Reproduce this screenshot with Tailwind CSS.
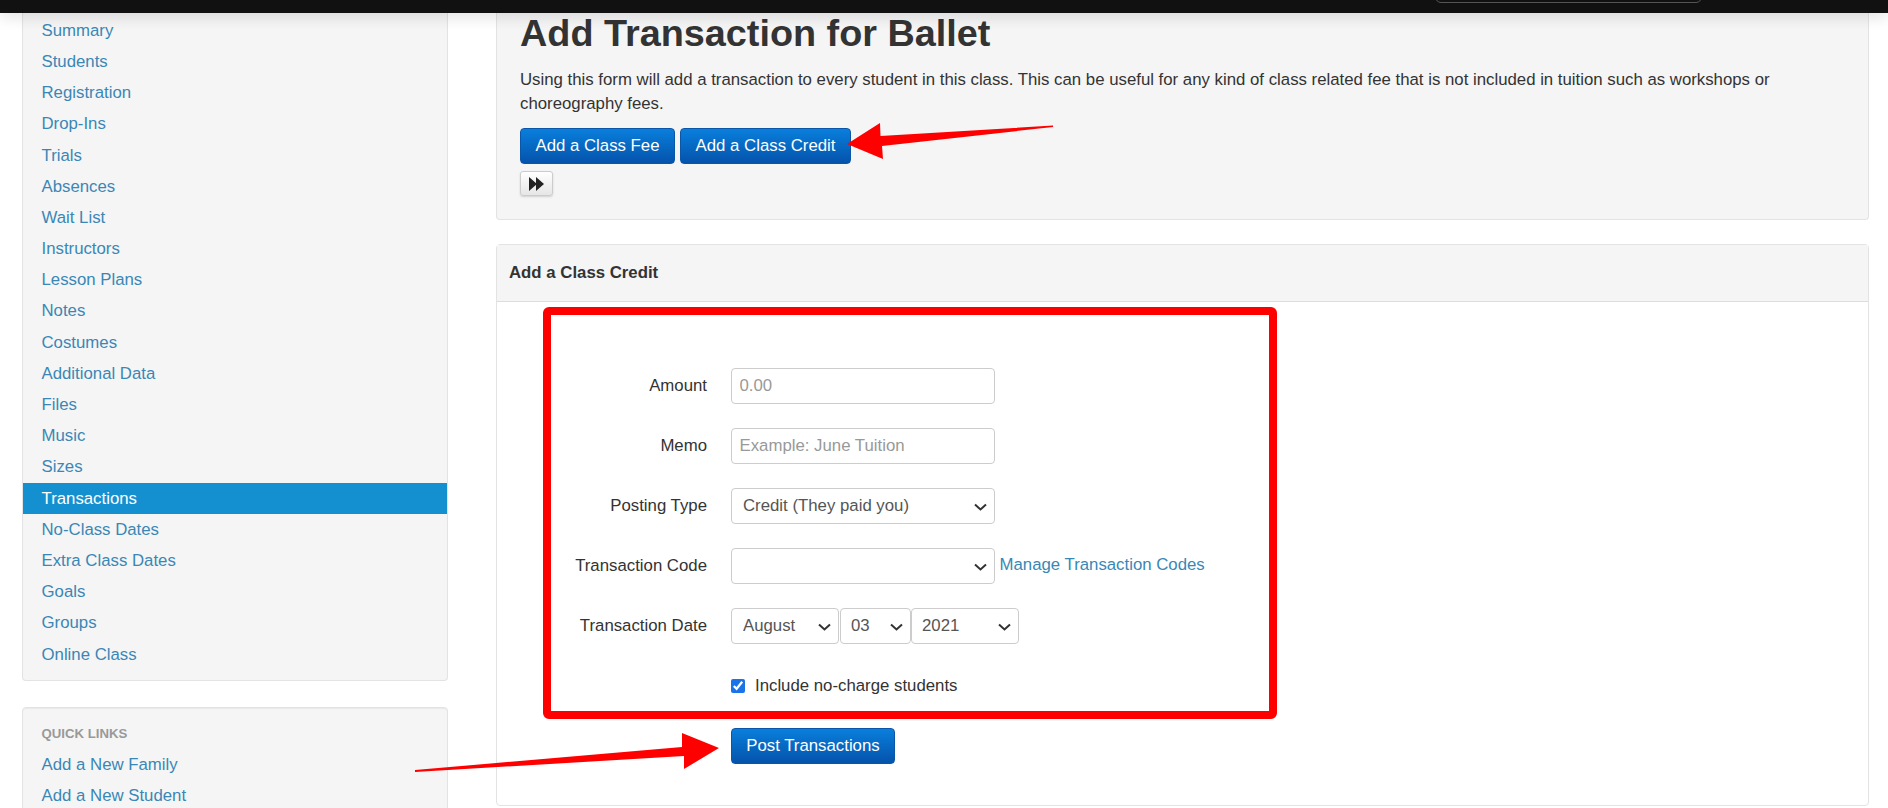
<!DOCTYPE html>
<html lang="en">
<head>
    <meta charset="UTF-8">
    <title>Add Transaction for Ballet</title>
    <script src="https://cdn.jsdelivr.net/npm/@tailwindcss/browser@4"></script>
</head>
<body class="relative h-[808px] overflow-hidden bg-white font-['Liberation_Sans',Arial,sans-serif] text-[16.8px] leading-6 text-[#333]">
    <!-- Top bar -->
    <div class="absolute inset-x-0 top-0 z-10 h-[13px] bg-[#111] shadow-[0_3px_16px_rgba(0,0,0,0.14)]">
        <div class="absolute left-[1435px] top-[-30px] h-[33px] w-[267px] rounded-md border border-[#555]"></div>
    </div>

    <div class="flex items-start pl-[22px] pr-[19px]">
        <!-- Sidebar -->
        <div class="w-[426px] shrink-0">
            <div class="h-[681px] rounded-b border border-t-0 border-[#e3e3e3] bg-[#f5f5f5] pt-[14.8px] shadow-[inset_0_1px_1px_rgba(0,0,0,0.05)]">
                <ul class="text-[#3a87b5]">
                    <li class="h-[31.2px] pl-[18.5px] leading-[31px]">Summary</li>
                    <li class="h-[31.2px] pl-[18.5px] leading-[31px]">Students</li>
                    <li class="h-[31.2px] pl-[18.5px] leading-[31px]">Registration</li>
                    <li class="h-[31.2px] pl-[18.5px] leading-[31px]">Drop-Ins</li>
                    <li class="h-[31.2px] pl-[18.5px] leading-[31px]">Trials</li>
                    <li class="h-[31.2px] pl-[18.5px] leading-[31px]">Absences</li>
                    <li class="h-[31.2px] pl-[18.5px] leading-[31px]">Wait List</li>
                    <li class="h-[31.2px] pl-[18.5px] leading-[31px]">Instructors</li>
                    <li class="h-[31.2px] pl-[18.5px] leading-[31px]">Lesson Plans</li>
                    <li class="h-[31.2px] pl-[18.5px] leading-[31px]">Notes</li>
                    <li class="h-[31.2px] pl-[18.5px] leading-[31px]">Costumes</li>
                    <li class="h-[31.2px] pl-[18.5px] leading-[31px]">Additional Data</li>
                    <li class="h-[31.2px] pl-[18.5px] leading-[31px]">Files</li>
                    <li class="h-[31.2px] pl-[18.5px] leading-[31px]">Music</li>
                    <li class="h-[31.2px] pl-[18.5px] leading-[31px]">Sizes</li>
                    <li class="h-[31.2px] bg-[#1490d0] pl-[18.5px] leading-[31px] text-white">Transactions</li>
                    <li class="h-[31.2px] pl-[18.5px] leading-[31px]">No-Class Dates</li>
                    <li class="h-[31.2px] pl-[18.5px] leading-[31px]">Extra Class Dates</li>
                    <li class="h-[31.2px] pl-[18.5px] leading-[31px]">Goals</li>
                    <li class="h-[31.2px] pl-[18.5px] leading-[31px]">Groups</li>
                    <li class="h-[31.2px] pl-[18.5px] leading-[31px]">Online Class</li>
                </ul>
            </div>
            <div class="mt-[26px] h-[120px] rounded border border-[#e3e3e3] bg-[#f5f5f5] pt-[14px] shadow-[inset_0_1px_1px_rgba(0,0,0,0.05)]">
                <div class="pl-[18.5px] text-[13.2px] font-bold leading-6 text-[#999]">QUICK LINKS</div>
                <div class="mt-[3px] pl-[18.5px] leading-[31px] text-[#3a87b5]">Add a New Family</div>
                <div class="pl-[18.5px] leading-[31px] text-[#3a87b5]">Add a New Student</div>
            </div>
        </div>

        <!-- Main column -->
        <div class="ml-[48px] flex-1">
            <div class="h-[220px] rounded-b border border-t-0 border-[#e3e3e3] bg-[#f5f5f5] pl-[23px] pr-[80px] pt-[11px]">
                <h1 class="text-[37.8px] font-bold leading-[44px] text-[#333]">Add Transaction for Ballet</h1>
                <p class="mt-[13px] leading-6">Using this form will add a transaction to every student in this class. This can be useful for any kind of class related fee that is not included in tuition such as workshops or choreography fees.</p>
                <div class="mt-[12px] flex gap-[5px]">
                    <button class="h-9 w-[155px] rounded border border-[#0a56a8] bg-gradient-to-b from-[#0a7fdc] to-[#0553ab] text-center text-white">Add a Class Fee</button>
                    <button class="h-9 w-[171px] rounded border border-[#0a56a8] bg-gradient-to-b from-[#0a7fdc] to-[#0553ab] text-center text-white">Add a Class Credit</button>
                </div>
                <button class="mt-[7px] flex h-[25px] w-[33px] items-center justify-center rounded-[3px] border border-[#ccc] bg-gradient-to-b from-white to-[#e6e6e6] shadow-[0_1px_2px_rgba(0,0,0,0.15)]">
                    <svg class="h-[14px] w-[15px] shrink-0" viewBox="0 0 15 14" fill="#222"><path d="M0 0l8 7-8 7zM7 0l8 7-8 7z"/></svg>
                </button>
            </div>

            <div class="mt-[24px] h-[562px] rounded border border-[#e3e3e3] bg-white">
                <div class="flex h-[57px] items-center border-b border-[#ddd] bg-[#f5f5f5] pl-3 font-bold text-[#333]">Add a Class Credit</div>
                <div class="pl-[234px] pt-[66px]">
                    <!-- Form rows: labels right-aligned to x 707 -->
                    <div class="flex h-9 items-center">
                        <label class="-ml-[234px] w-[210px] shrink-0 text-right">Amount</label>
                        <input class="ml-[24px] h-9 w-[264px] rounded border border-[#ccc] px-[7.5px] placeholder:text-[#999]" placeholder="0.00">
                    </div>
                    <div class="mt-6 flex h-9 items-center">
                        <label class="-ml-[234px] w-[210px] shrink-0 text-right">Memo</label>
                        <input class="ml-[24px] h-9 w-[264px] rounded border border-[#ccc] px-[7.5px] placeholder:text-[#999]" placeholder="Example: June Tuition">
                    </div>
                    <div class="mt-6 flex h-9 items-center">
                        <label class="-ml-[234px] w-[210px] shrink-0 text-right">Posting Type</label>
                        <div class="relative ml-[24px] h-9 w-[264px]">
                            <select class="h-9 w-full appearance-none rounded border border-[#ccc] bg-white pl-[11px] text-[#555]"><option>Credit (They paid you)</option></select>
                            <svg class="absolute right-[8px] top-[15px] h-2 w-[13px]" viewBox="0 0 13 8" fill="none" stroke="#333" stroke-width="2"><path d="M1 1.500l5.500 5 5.500-5"/></svg>
                        </div>
                    </div>
                    <div class="mt-6 flex h-9 items-center">
                        <label class="-ml-[234px] w-[210px] shrink-0 text-right">Transaction Code</label>
                        <div class="relative ml-[24px] h-9 w-[264px]">
                            <select class="h-9 w-full appearance-none rounded border border-[#ccc] bg-white pl-[11px] text-[#555]"><option></option></select>
                            <svg class="absolute right-[8px] top-[15px] h-2 w-[13px]" viewBox="0 0 13 8" fill="none" stroke="#333" stroke-width="2"><path d="M1 1.500l5.500 5 5.500-5"/></svg>
                        </div>
                        <span class="ml-[4.5px] -mt-[3px] text-[#3a87b5]">Manage Transaction Codes</span>
                    </div>
                    <div class="mt-6 flex h-9 items-center">
                        <label class="-ml-[234px] w-[210px] shrink-0 text-right">Transaction Date</label>
                        <div class="relative ml-[24px] h-9 w-[108px]">
                            <select class="h-9 w-full appearance-none rounded border border-[#ccc] bg-white pl-[11px] text-[#555]"><option>August</option></select>
                            <svg class="absolute right-[8px] top-[15px] h-2 w-[13px]" viewBox="0 0 13 8" fill="none" stroke="#333" stroke-width="2"><path d="M1 1.500l5.500 5 5.500-5"/></svg>
                        </div>
                        <div class="relative ml-px h-9 w-[71px]">
                            <select class="h-9 w-full appearance-none rounded border border-[#ccc] bg-white pl-[10px] text-[#555]"><option>03</option></select>
                            <svg class="absolute right-[8px] top-[15px] h-2 w-[13px]" viewBox="0 0 13 8" fill="none" stroke="#333" stroke-width="2"><path d="M1 1.500l5.500 5 5.500-5"/></svg>
                        </div>
                        <div class="relative h-9 w-[108px]">
                            <select class="h-9 w-full appearance-none rounded border border-[#ccc] bg-white pl-[10px] text-[#555]"><option>2021</option></select>
                            <svg class="absolute right-[8px] top-[15px] h-2 w-[13px]" viewBox="0 0 13 8" fill="none" stroke="#333" stroke-width="2"><path d="M1 1.500l5.500 5 5.500-5"/></svg>
                        </div>
                    </div>
                    <div class="mt-[33px] flex h-[18px] items-center">
                        <input type="checkbox" checked class="ml-0 h-[14px] w-[14px] accent-[#1a73e8]">
                        <span class="ml-[10px]">Include no-charge students</span>
                    </div>
                    <button class="mt-[33px] block h-9 w-[164px] rounded border border-[#0a56a8] bg-gradient-to-b from-[#0a7fdc] to-[#0553ab] text-center text-white">Post Transactions</button>
                </div>
            </div>
        </div>
    </div>

    <!-- Red annotations drawn over the screenshot -->
    <div class="absolute left-[543px] top-[307px] h-[412px] w-[734px] rounded-[6px] border-[8px] border-[#f00]"></div>
    <svg class="absolute left-0 top-0" width="1888" height="808" viewBox="0 0 1888 808" fill="#f00">
        <path d="M847 144L880 123L880.500 136L1053 125.500L1053 127L882 146L883 159Z"/>
        <path d="M719 748L682 733L682 747L415 770L415 772L684 756L684 769Z"/>
    </svg>
</body>
</html>
